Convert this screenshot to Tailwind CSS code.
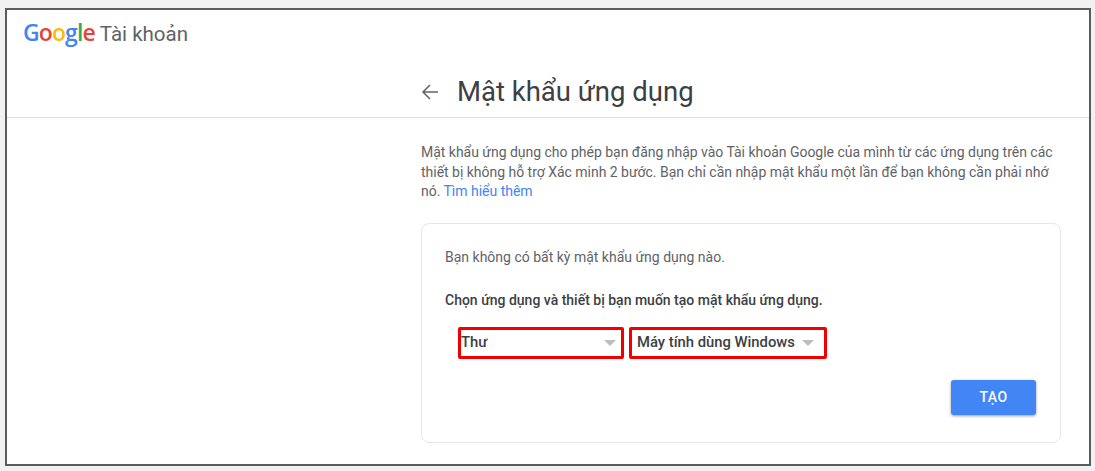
<!DOCTYPE html>
<html lang="en">

<head>
    <meta charset="UTF-8">
    <meta name="viewport" content="width=device-width, initial-scale=1.0">
    <title>Mật khẩu ứng dụng</title>
    <script src="https://cdn.jsdelivr.net/npm/@tailwindcss/browser@4"></script>
</head>

<body class="bg-[#f1f1f1] font-['Roboto',sans-serif]">
    <div class="w-[1095px] h-[471px] pt-[8px] pl-[5px] overflow-hidden">
        <!-- screenshot frame -->
        <div class="w-[1086px] h-[458px] bg-white border-2 border-[#5c5c5c] flex flex-col">
            <div class="h-[108px] border-b border-[#e2e2e2]">
                <div class="flex items-baseline pl-[16px] pt-[6px] leading-[32px]">
                    <span class="font-['Open_Sans'] font-semibold text-[23px] tracking-[-0.9px]">
                        <span class="text-[#4285f4]">G</span><span class="text-[#ea4335]">o</span><span class="text-[#fbbc05]">o</span><span class="text-[#4285f4]">g</span><span class="text-[#34a853]">l</span><span class="text-[#ea4335]">e</span>
                    </span>
                    <span class="ml-[5px] text-[20.5px] text-[#5f6368]">Tài khoản</span>
                </div>
                <div class="flex items-center pl-[414px] mt-[24px]">
                    <svg class="w-[18px] h-[18px]" viewBox="0 0 18 18" fill="none" stroke="#5f6368" stroke-width="1.5">
                        <path d="M17 9H2M9 2L2 9l7 7" />
                    </svg>
                    <h1 class="ml-[18px] text-[27.5px] leading-[36px] text-[#3c4043]">Mật khẩu ứng dụng</h1>
                </div>
            </div>

            <div class="pl-[414px] pr-[28px] pt-[25px]">
                <p class="text-[14px] tracking-[-0.02px] leading-[19.5px] text-[#5f6368]">
                    Mật khẩu ứng dụng cho phép bạn đăng nhập vào Tài khoản Google của mình từ các ứng dụng trên các thiết bị không hỗ trợ Xác minh 2 bước. Bạn chỉ cần nhập mật khẩu một lần để bạn không cần phải nhớ nó. <a class="text-[#4285f4]">Tìm hiểu thêm</a>
                </p>

                <div class="mt-[21px] h-[220px] border border-[#e6e6e6] rounded-lg pl-[23px] pr-[23px] pt-[23px] text-[14px] text-[#3c4043]">
                    <p class="leading-[20px] text-[#5f6368]">Bạn không có bất kỳ mật khẩu ứng dụng nào.</p>
                    <p class="mt-[23px] leading-[20px] font-medium">Chọn ứng dụng và thiết bị bạn muốn tạo mật khẩu ứng dụng.</p>
                    <div class="flex mt-[17px] ml-[13px] gap-[5px] text-[14.8px]">
                        <div class="w-[166px] h-[32px] border-[3px] border-[#f00000] rounded-[2px] flex items-center justify-between pl-0 pr-[5px] font-medium">
                            <span>Thư</span>
                            <span class="w-0 h-0 border-x-[6px] border-x-transparent border-t-[6px] border-t-[#bdbdbd]"></span>
                        </div>
                        <div class="w-[198px] h-[32px] border-[3px] border-[#f00000] rounded-[2px] flex items-center pl-[5px] font-medium">
                            <span>Máy tính dùng Windows</span>
                            <span class="ml-[7px] w-0 h-0 border-x-[6px] border-x-transparent border-t-[6px] border-t-[#bdbdbd]"></span>
                        </div>
                    </div>
                    <div class="flex justify-end mt-[21px] pr-[1px]">
                        <button class="w-[85px] h-[35px] bg-[#4285f4] text-white rounded-[3px] text-[14px] font-medium tracking-[0.5px] shadow-[0_1px_3px_rgba(0,0,0,0.4)]">TẠO</button>
                    </div>
                </div>
            </div>
        </div>
    </div>
</body>

</html>
